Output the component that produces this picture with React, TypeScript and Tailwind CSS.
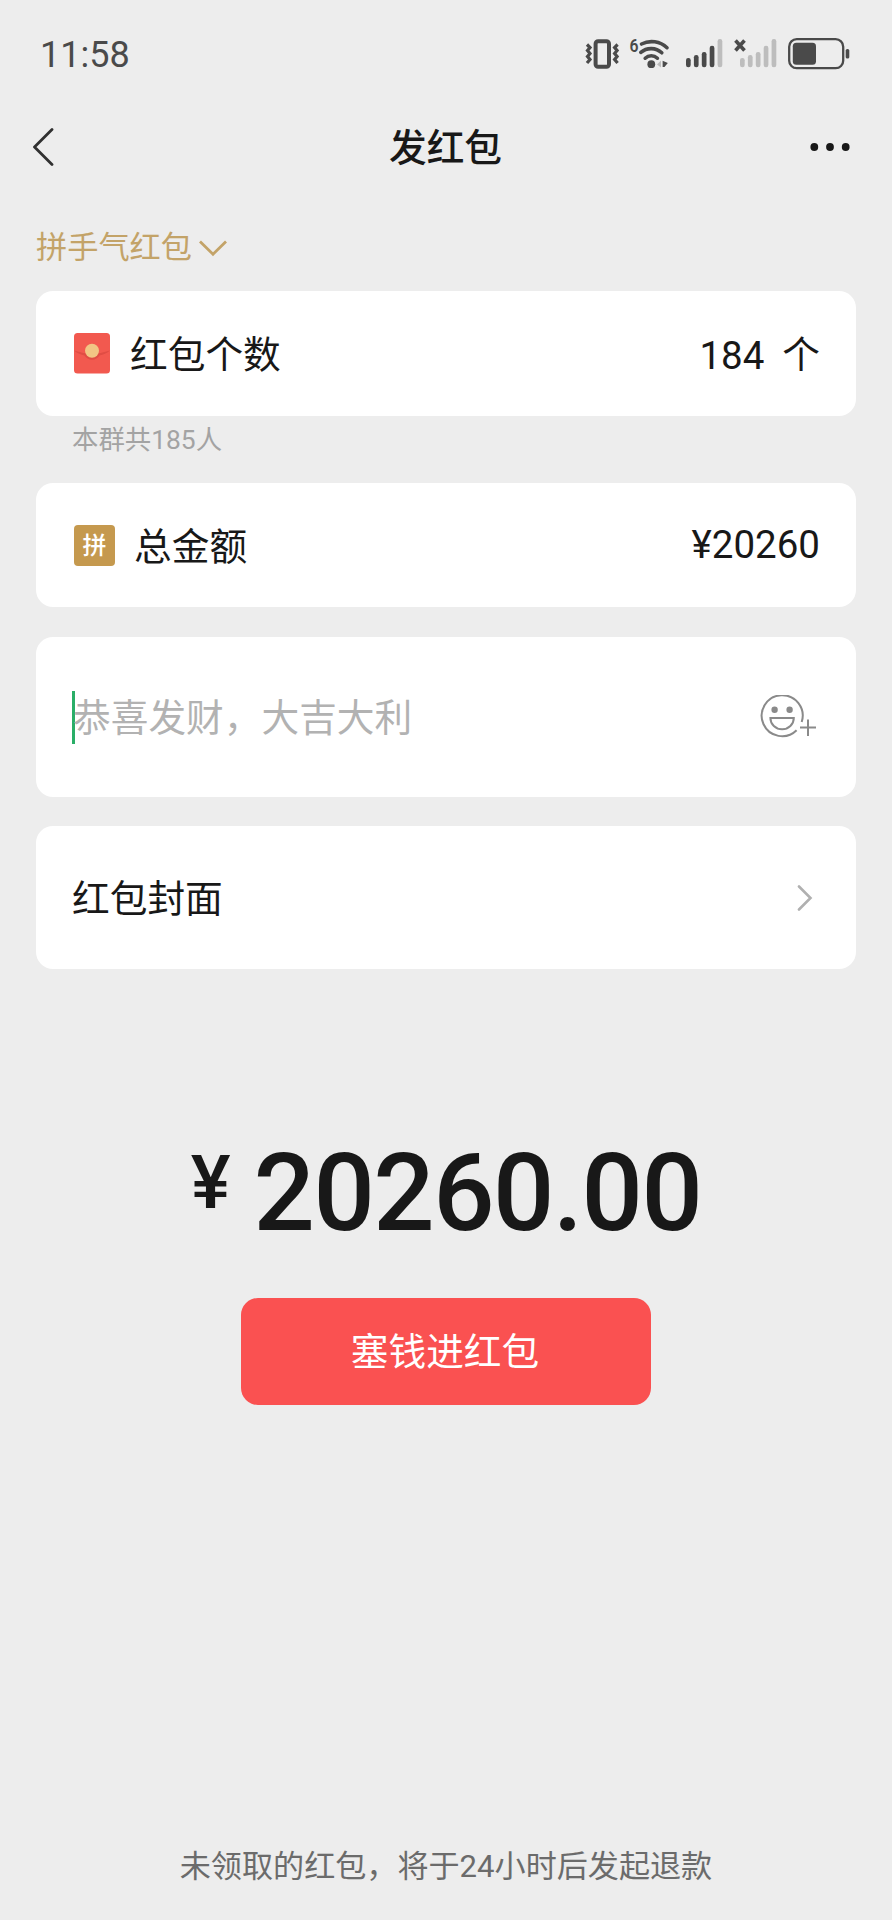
import type { ReactNode } from 'react';

const barTops = [19, 16, 13, 6.7, 0];

function Vibrate() {
  return (
    <svg width="36" height="30" viewBox="0 0 36 30" fill="none" stroke="#4a4a4a">
      <rect x="10.6" y="2.2" width="13.4" height="25.6" rx="2.5" strokeWidth="4" />
      <path d="M2 5.5 L5 8.5 L2.5 11.5 L5 14.5 L2.5 17.5 L5 20.5 L2 24" strokeWidth="3.2" />
      <path d="M32.6 5.5 L29.6 8.5 L32.1 11.5 L29.6 14.5 L32.1 17.5 L29.6 20.5 L32.6 24" strokeWidth="3.2" />
    </svg>
  );
}

function Wifi() {
  return (
    <svg width="42" height="42" viewBox="0 -6 42 42" fill="none" stroke="#4a4a4a" strokeWidth="3.6" strokeLinecap="round">
      <text x="0.4" y="13.4" fontSize="19" fontWeight="600" textLength="9" lengthAdjust="spacingAndGlyphs" fill="#4a4a4a" stroke="none">6</text>
      <path d="M12.5 5 A22.5 22.5 0 0 1 38 8.7" />
      <path d="M11.8 13.4 A15.8 15.8 0 0 1 32.8 13.8" />
      <path d="M16.2 19.2 A9 9 0 0 1 28.4 19.2" />
      <circle cx="22.3" cy="25.2" r="3.9" fill="#4a4a4a" stroke="none" />
      <path d="M32 21.5 V28.5 L28 25.5 Z" fill="#bdbdbd" stroke="none" />
      <path d="M33.6 21.8 L38.8 24 L35.5 28 H33.6 Z" fill="#4a4a4a" stroke="none" />
    </svg>
  );
}

function Signal({ active }: { active: number }) {
  return (
    <svg width="37" height="29" viewBox="0 0 37 29">
      {barTops.map((top, i) => (
        <rect key={i} x={i * 7.9} y={top} width="4.7" height={28.3 - top} rx="2.2" fill={i < active ? '#4a4a4a' : '#bdbdbd'} />
      ))}
    </svg>
  );
}

function Battery() {
  return (
    <svg width="62" height="32" viewBox="0 0 62 32" fill="none">
      <rect x="1.2" y="1.2" width="54" height="29" rx="7.5" stroke="#4a4a4a" strokeWidth="2.3" />
      <rect x="4.8" y="4.8" width="23.2" height="22" rx="3.5" fill="#4a4a4a" />
      <rect x="57.7" y="11" width="3.6" height="9.6" rx="1.6" fill="#4a4a4a" />
    </svg>
  );
}

function Envelope() {
  return (
    <svg width="36" height="41" viewBox="0 0 36 41">
      <rect width="36" height="40.5" rx="3.5" fill="#f2594f" />
      <path d="M0 17.5 Q9 20.5 18 21 Q27 20.5 36 17.5 Q31 21.8 25.6 22.4 A8.8 8.8 0 0 1 10.4 22.4 Q5 21.8 0 17.5 Z" fill="#e04d44" />
      <circle cx="18" cy="17.8" r="7" fill="#f2c584" />
    </svg>
  );
}

function EmojiAdd() {
  return (
    <svg width="56" height="44" viewBox="0 0 56 44" fill="none" stroke="#8a8a8a" strokeWidth="2">
      <path d="M41.7 27 A20.5 20.5 0 1 0 36.6 35.3" />
      <circle cx="14.6" cy="14.8" r="3.2" fill="#8a8a8a" stroke="none" />
      <circle cx="29.6" cy="14.8" r="3.2" fill="#8a8a8a" stroke="none" />
      <path d="M10.4 23 H33.8 A11.7 11.3 0 0 1 10.4 23 Z" />
      <path d="M40 32.6 H56 M48 24.5 V41" />
    </svg>
  );
}

function Card({ className, children }: { className: string; children: ReactNode }) {
  return <section className={`flex items-center rounded-[17px] bg-white ${className}`}>{children}</section>;
}

export default function App() {
  return (
    <div className="flex h-[1920px] w-[892px] flex-col bg-[#ededed] font-[Roboto,'Noto_Sans_CJK_SC',sans-serif] text-[37.7px] leading-none text-[#181818]">
      <div className="flex h-[107px] items-center justify-between pl-10 pr-[42px]">
        <span className="pt-[2px] text-[36px] text-[#4a4a4a]">11:58</span>
        <div className="flex items-center">
          <Vibrate />
          <div className="ml-2"><Wifi /></div>
          <div className="ml-[15px]"><Signal active={4} /></div>
          <div className="relative ml-[17.5px]">
            <Signal active={0} />
            <svg className="absolute -left-[6px] top-0" width="12" height="13" viewBox="0 0 12 13" stroke="#4a4a4a" strokeWidth="3.6">
              <path d="M1.5 1.5 L10.5 11.5 M10.5 1.5 L1.5 11.5" />
            </svg>
          </div>
          <div className="ml-[11px]"><Battery /></div>
        </div>
      </div>

      <header className="flex h-20 items-center pl-8 pr-[42px]">
        <svg width="40" height="38" viewBox="0 0 40 38" fill="none" stroke="#303030" strokeWidth="2.8" strokeLinecap="round" strokeLinejoin="round">
          <path d="M20 1.5 L2.5 19 L20 36.5" />
        </svg>
        <h1 className="grow pl-[9px] pt-[4px] text-center font-medium">发红包</h1>
        <svg width="40" height="8" viewBox="0 0 40 8" fill="#181818">
          <circle cx="4.3" cy="4" r="3.9" />
          <circle cx="20" cy="4" r="3.9" />
          <circle cx="35.7" cy="4" r="3.9" />
        </svg>
      </header>

      <div className="flex h-[104px] items-center pl-9 pt-[17px] text-[31.2px] text-[#c3a368]">
        <span className="pt-px">拼手气红包</span>
        <svg className="ml-[6px]" width="30" height="18" viewBox="0 0 30 18" fill="none" stroke="#c3a368" strokeWidth="2.8">
          <path d="M2 2.5 L15 15.2 L28 2.5" />
        </svg>
      </div>

      <main className="flex flex-col px-9">
        <Card className="h-[125px] pl-[38px] pr-9">
          <Envelope />
          <span className="ml-5 grow pt-[5px]">红包个数</span>
          <span className="pt-[5px] text-[38.5px]">184</span>
          <span className="ml-[18px] pt-[5px]">个</span>
        </Card>
        <p className="flex h-[67px] items-center pb-[18px] pl-9 text-[26.4px] text-[#a3a3a3]">本群共185人</p>
        <Card className="h-[124px] pl-[38px] pr-9">
          <span className="flex size-[41px] items-center justify-center rounded-[4px] bg-[#c5994e] pt-px text-[24px] font-medium text-white">拼</span>
          <span className="ml-[19px] grow pt-[5px]">总金额</span>
          <span className="text-[38.5px]">¥20260</span>
        </Card>
        <Card className="mt-[30px] h-[160px] pl-9 pr-10">
          <span className="h-[53px] w-[3px] bg-[#2aae67]" />
          <span className="-ml-[2px] grow pt-[4px] text-[#b2b2b2]">恭喜发财，大吉大利</span>
          <EmojiAdd />
        </Card>
        <Card className="mt-[29px] h-[143px] px-9">
          <span className="grow pt-[5px]">红包封面</span>
          <svg className="mr-[7px]" width="16" height="26" viewBox="0 0 16 26" fill="none" stroke="#b0b0b0" strokeWidth="2.6" strokeLinecap="round">
            <path d="M2 1.5 L13.5 13 L2 24.5" />
          </svg>
        </Card>
      </main>

      <div className="mt-[170px] flex items-start justify-center font-medium">
        <span className="pt-[6px] text-[75px]">¥</span>
        <span className="ml-[23px] text-[108px] tracking-[-1.5px]">20260.00</span>
      </div>

      <button className="mt-[51px] h-[107px] w-[410px] self-center rounded-[17px] bg-[#fa5151] pr-[2px] pt-[2px] text-[37.7px] text-white">塞钱进红包</button>

      <footer className="mt-auto pb-[38px] text-center text-[31.1px] text-[#6b6b6b]">未领取的红包，将于24小时后发起退款</footer>
    </div>
  );
}
